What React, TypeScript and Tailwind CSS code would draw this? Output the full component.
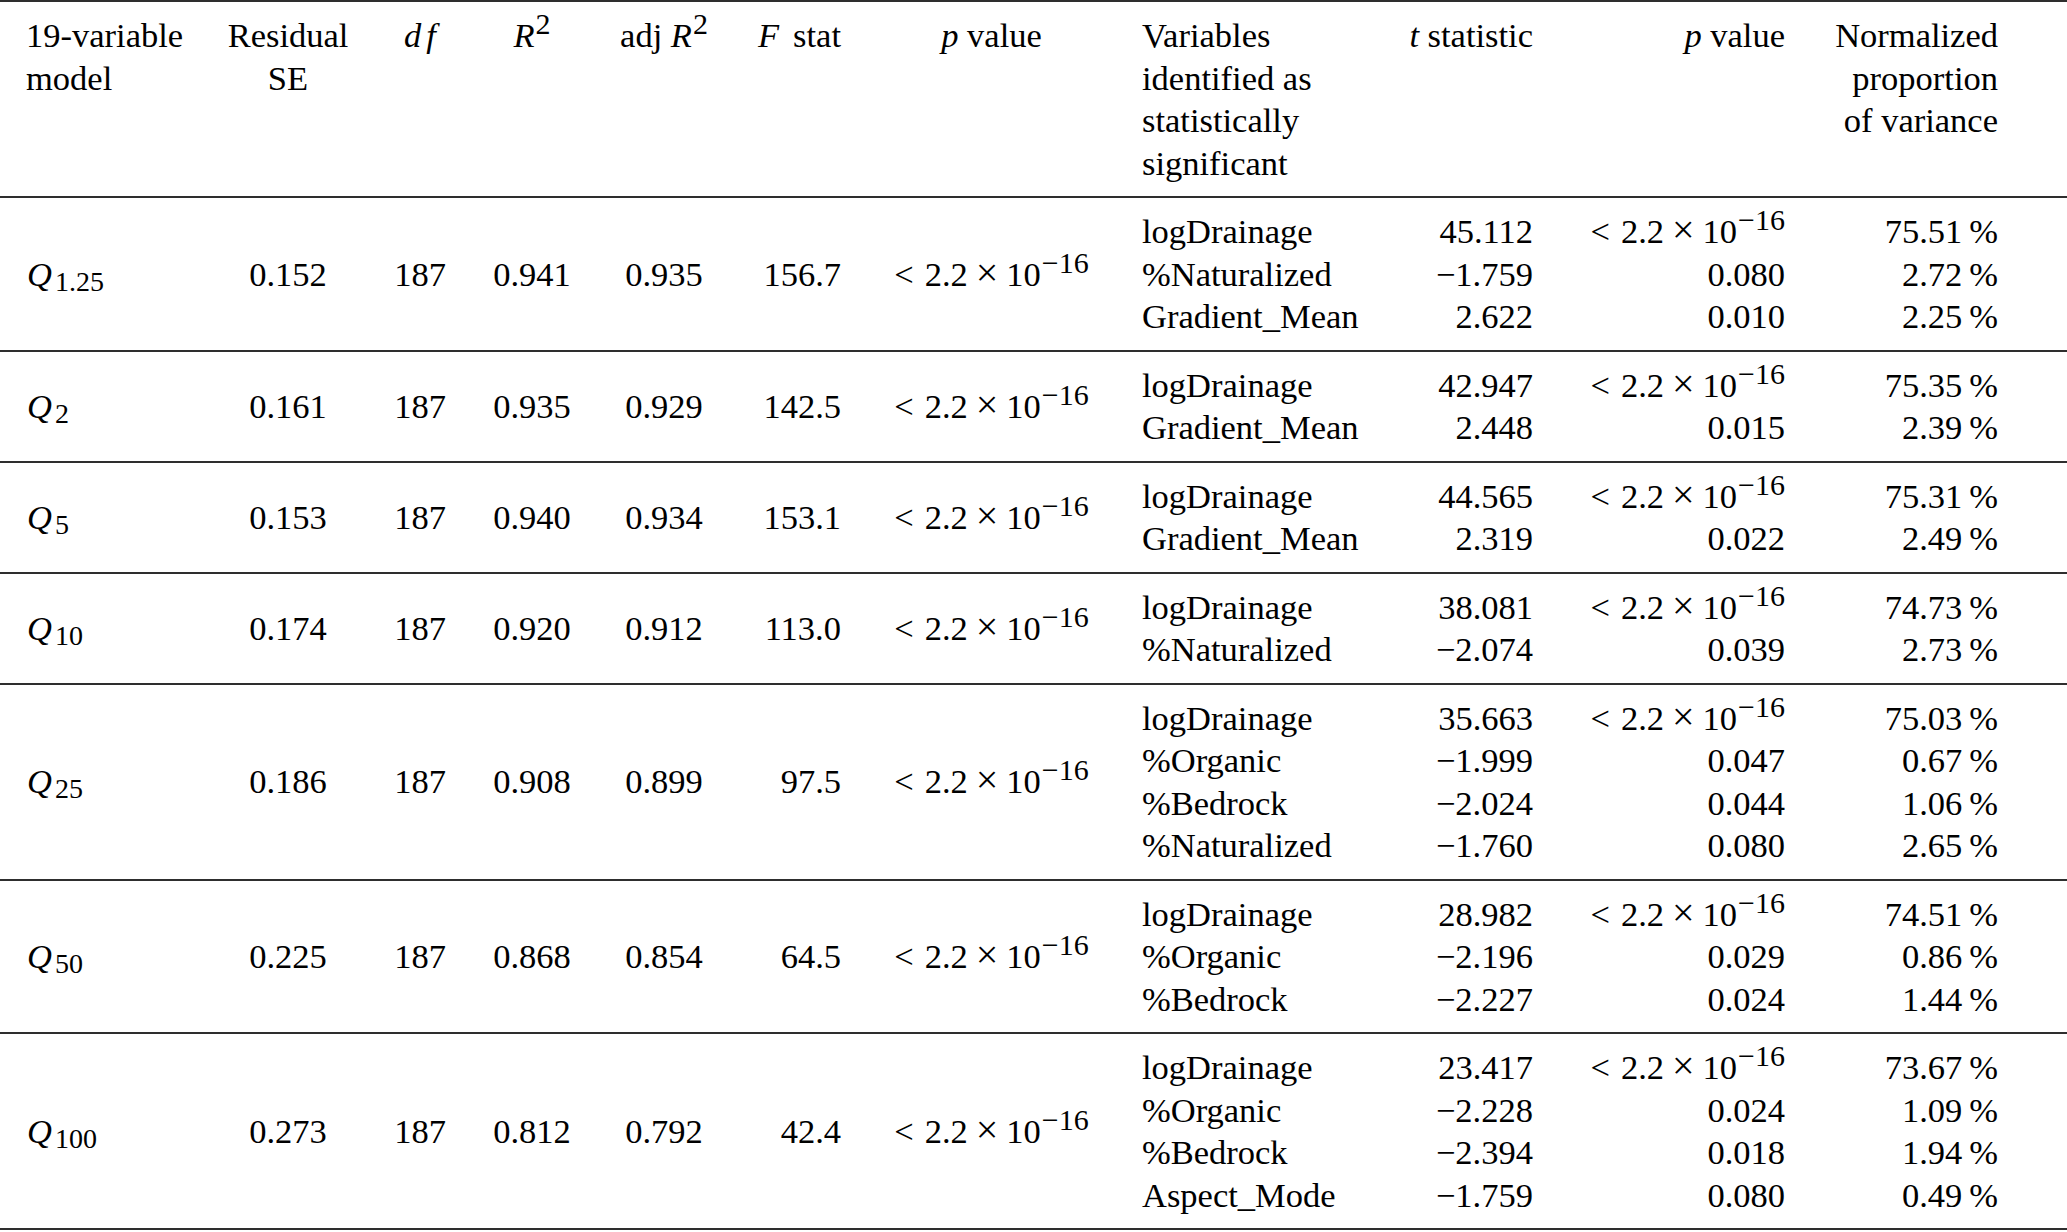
import React from "react";

type VarRow = [string, string, string | null, string];
type Row = { q: string; se: string; r2: string; adj: string; f: string; vars: VarRow[] };

const rows: Row[] = [
  { q: "1.25", se: "0.152", r2: "0.941", adj: "0.935", f: "156.7", vars: [["logDrainage", "45.112", null, "75.51"], ["%Naturalized", "\u22121.759", "0.080", "2.72"], ["Gradient_Mean", "2.622", "0.010", "2.25"]] },
  { q: "2", se: "0.161", r2: "0.935", adj: "0.929", f: "142.5", vars: [["logDrainage", "42.947", null, "75.35"], ["Gradient_Mean", "2.448", "0.015", "2.39"]] },
  { q: "5", se: "0.153", r2: "0.940", adj: "0.934", f: "153.1", vars: [["logDrainage", "44.565", null, "75.31"], ["Gradient_Mean", "2.319", "0.022", "2.49"]] },
  { q: "10", se: "0.174", r2: "0.920", adj: "0.912", f: "113.0", vars: [["logDrainage", "38.081", null, "74.73"], ["%Naturalized", "\u22122.074", "0.039", "2.73"]] },
  { q: "25", se: "0.186", r2: "0.908", adj: "0.899", f: "97.5", vars: [["logDrainage", "35.663", null, "75.03"], ["%Organic", "\u22121.999", "0.047", "0.67"], ["%Bedrock", "\u22122.024", "0.044", "1.06"], ["%Naturalized", "\u22121.760", "0.080", "2.65"]] },
  { q: "50", se: "0.225", r2: "0.868", adj: "0.854", f: "64.5", vars: [["logDrainage", "28.982", null, "74.51"], ["%Organic", "\u22122.196", "0.029", "0.86"], ["%Bedrock", "\u22122.227", "0.024", "1.44"]] },
  { q: "100", se: "0.273", r2: "0.812", adj: "0.792", f: "42.4", vars: [["logDrainage", "23.417", null, "73.67"], ["%Organic", "\u22122.228", "0.024", "1.09"], ["%Bedrock", "\u22122.394", "0.018", "1.94"], ["Aspect_Mode", "\u22121.759", "0.080", "0.49"]] },
];

const grid =
  "grid grid-cols-[218px_140px_124px_100px_164px_95px_301px_253px_138px_252px_213px_1fr]";

function Sup({ children }: { children: React.ReactNode }) {
  return <span className="relative -top-[13px] ml-[1px] text-[30px] leading-none">{children}</span>;
}

function PLess() {
  return (
    <span className="whitespace-nowrap">
      <span>&lt;</span>
      <span className="ml-[11px]">2.2</span>
      <span className="ml-[8px] text-[40px] leading-none">&times;</span>
      <span className="ml-[8px]">10</span>
      <Sup>{"\u221216"}</Sup>
    </span>
  );
}

function QLabel({ sub }: { sub: string }) {
  return (
    <span className="whitespace-nowrap">
      <i>Q</i>
      <span className="relative top-[5px] ml-[3px] text-[28px] leading-none">{sub}</span>
    </span>
  );
}

export default function App() {
  return (
    <div className="w-[2067px] h-[1232px] bg-white text-black font-['Liberation_Serif',serif] text-[34.5px] leading-[42.5px] overflow-hidden">
      <div className="border-t-2 border-[#2e2e2e]">
        {/* Header */}
        <div className={`${grid} items-start py-3 border-b-2 border-[#2e2e2e]`}>
          <div className="pl-[26px] flex flex-col">
            <span>19-variable</span>
            <span>model</span>
          </div>
          <div className="flex flex-col items-center">
            <span>Residual</span>
            <span>SE</span>
          </div>
          <div className="text-center">
            <i>d</i>
            <i className="ml-[5px]">f</i>
          </div>
          <div className="text-center">
            <i>R</i>
            <Sup>2</Sup>
          </div>
          <div className="text-center whitespace-nowrap">
            adj <i>R</i>
            <Sup>2</Sup>
          </div>
          <div className="text-right whitespace-nowrap">
            <i>F</i>
            <span className="ml-[14px]">stat</span>
          </div>
          <div className="text-center whitespace-nowrap">
            <i>p</i> value
          </div>
          <div className="flex flex-col">
            <span>Variables</span>
            <span>identified as</span>
            <span>statistically</span>
            <span>significant</span>
          </div>
          <div className="text-right whitespace-nowrap">
            <i>t</i> statistic
          </div>
          <div className="text-right whitespace-nowrap">
            <i>p</i> value
          </div>
          <div className="flex flex-col items-end">
            <span>Normalized</span>
            <span>proportion</span>
            <span>of variance</span>
          </div>
          <div />
        </div>

        {/* Body */}
        {rows.map((r) => (
          <div key={r.q} className={`${grid} items-center py-3 border-b-2 border-[#2e2e2e]`}>
            <div className="pl-[27px]">
              <QLabel sub={r.q} />
            </div>
            <div className="text-center">{r.se}</div>
            <div className="text-center">187</div>
            <div className="text-center">{r.r2}</div>
            <div className="text-center">{r.adj}</div>
            <div className="text-right">{r.f}</div>
            <div className="text-center">
              <PLess />
            </div>
            <div className="flex flex-col whitespace-nowrap">
              {r.vars.map((v) => (
                <span key={v[0]}>{v[0]}</span>
              ))}
            </div>
            <div className="flex flex-col items-end whitespace-nowrap">
              {r.vars.map((v) => (
                <span key={v[0]}>{v[1]}</span>
              ))}
            </div>
            <div className="flex flex-col items-end whitespace-nowrap">
              {r.vars.map((v) => (
                <span key={v[0]}>{v[2] === null ? <PLess /> : v[2]}</span>
              ))}
            </div>
            <div className="flex flex-col items-end whitespace-nowrap">
              {r.vars.map((v) => (
                <span key={v[0]}>
                  {v[3]}
                  {"\u2009%"}
                </span>
              ))}
            </div>
            <div />
          </div>
        ))}
      </div>
    </div>
  );
}
